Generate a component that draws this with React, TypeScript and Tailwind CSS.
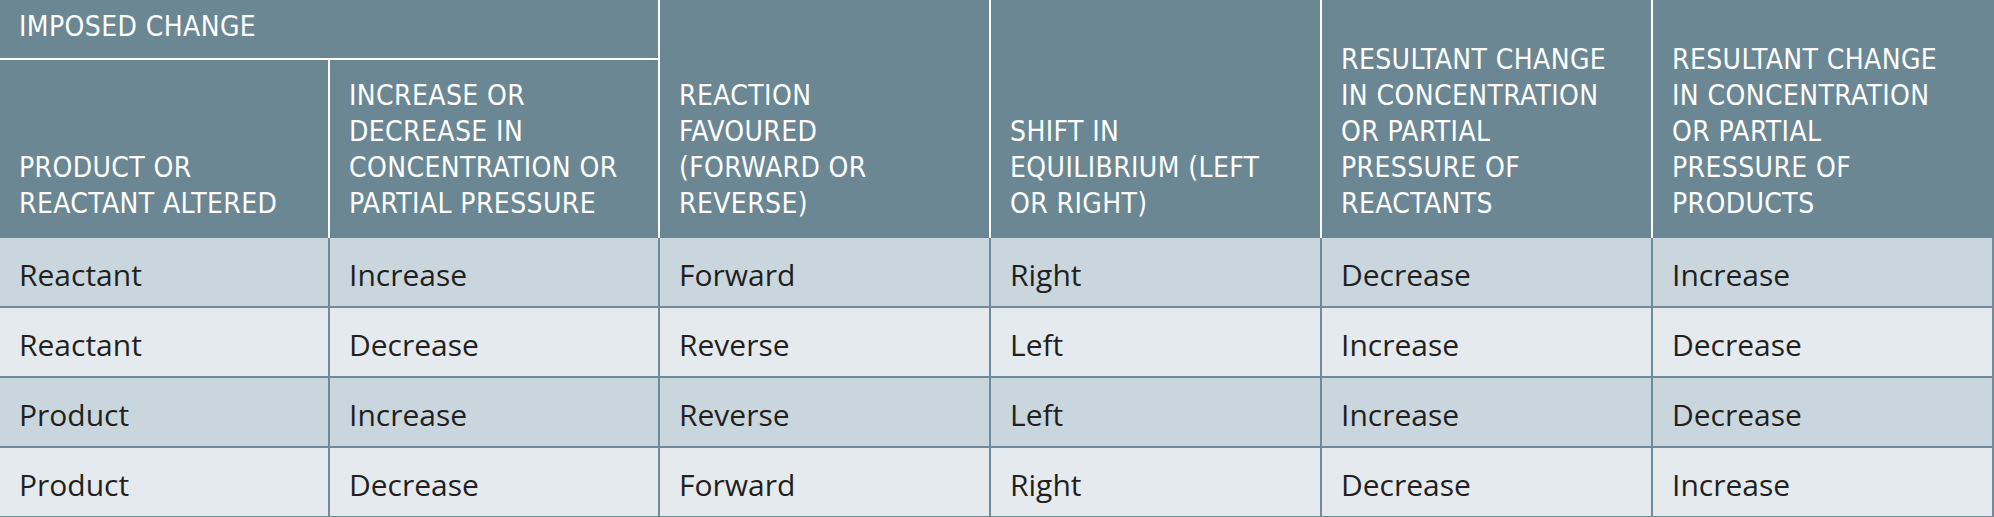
import * as React from "react";

const headFont = {
  fontFamily: '"DejaVu Sans Condensed", "DejaVu Sans", sans-serif',
};
const bodyFont = { fontFamily: '"Open Sans", "Noto Sans", sans-serif' };

const tableRows = [
  ["Reactant", "Increase", "Forward", "Right", "Decrease", "Increase"],
  ["Reactant", "Decrease", "Reverse", "Left", "Increase", "Decrease"],
  ["Product", "Increase", "Reverse", "Left", "Increase", "Decrease"],
  ["Product", "Decrease", "Forward", "Right", "Decrease", "Increase"],
];

const HeadText = ({ lines }: { lines: string[] }) => (
  <div className="whitespace-nowrap">
    {lines.map((l, i) => (
      <div key={"hl" + i}>{l}</div>
    ))}
  </div>
);

const App = () => {
  const cols = "grid grid-cols-[328px_330px_331px_331px_331px_1fr]";

  return (
    <div className="w-[1994px] h-[517px] overflow-hidden bg-white">
      {/* header */}
      <div
        className={`${cols} grid-rows-[60px_178px] bg-[#6b8794] text-white text-[28px] leading-[36px] font-stretch-condensed tracking-[0.4px]`}
        style={headFont}
      >
        <div className="col-span-2 border-b-2 border-white px-[19px] pt-[9px]">
          IMPOSED CHANGE
        </div>
        <div className="row-span-2 border-l-2 border-white px-[19px] pb-[16px] flex items-end">
          <HeadText lines={["REACTION", "FAVOURED", "(FORWARD OR", "REVERSE)"]} />
        </div>
        <div className="row-span-2 border-l-2 border-white px-[19px] pb-[16px] flex items-end">
          <HeadText lines={["SHIFT IN", "EQUILIBRIUM (LEFT", "OR RIGHT)"]} />
        </div>
        <div className="row-span-2 border-l-2 border-white px-[19px] pb-[16px] flex items-end">
          <HeadText
            lines={[
              "RESULTANT CHANGE",
              "IN CONCENTRATION",
              "OR PARTIAL",
              "PRESSURE OF",
              "REACTANTS",
            ]}
          />
        </div>
        <div className="row-span-2 border-l-2 border-white px-[19px] pb-[16px] flex items-end">
          <HeadText
            lines={[
              "RESULTANT CHANGE",
              "IN CONCENTRATION",
              "OR PARTIAL",
              "PRESSURE OF",
              "PRODUCTS",
            ]}
          />
        </div>
        <div className="px-[19px] pb-[16px] flex items-end">
          <HeadText lines={["PRODUCT OR", "REACTANT ALTERED"]} />
        </div>
        <div className="border-l-2 border-white px-[19px] pb-[16px] flex items-end">
          <HeadText
            lines={[
              "INCREASE OR",
              "DECREASE IN",
              "CONCENTRATION OR",
              "PARTIAL PRESSURE",
            ]}
          />
        </div>
      </div>

      {/* body */}
      <div className="text-[30px] text-[#231f20]" style={bodyFont}>
        {tableRows.map((row, r) => (
          <div
            key={"row" + r}
            className={`${cols} h-[70px] border-b-2 border-[#6f8b99] ${
              r % 2 === 0 ? "bg-[#c9d6de]" : "bg-[#e5eaee]"
            }`}
          >
            {row.map((cell, c) => (
              <div
                key={"cell" + c}
                className={`flex items-center px-[19px] pt-[4px] ${
                  c > 0 ? "border-l-2 border-[#6f8b99]" : ""
                } ${c === 5 ? "border-r-2 border-[#6f8b99]" : ""}`}
              >
                {cell}
              </div>
            ))}
          </div>
        ))}
      </div>
    </div>
  );
};

export default App;
